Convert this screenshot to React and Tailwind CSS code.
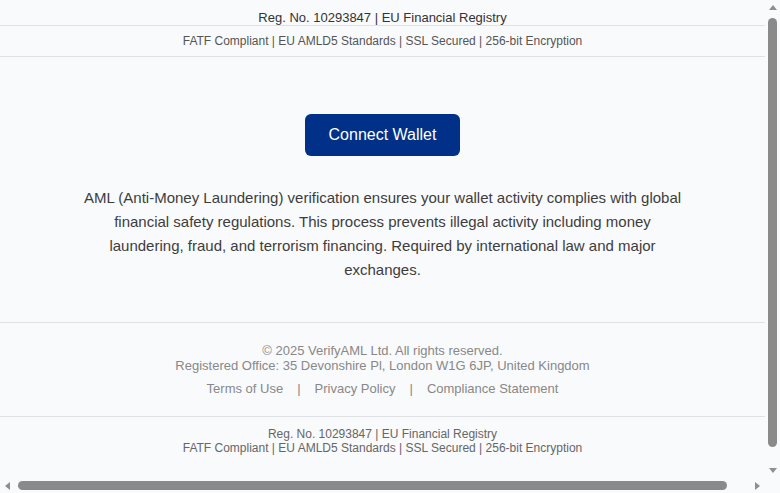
import React from 'react'

const REG = 'Reg. No. 10293847 | EU Financial Registry'
const COMPLIANCE = 'FATF Compliant | EU AMLD5 Standards | SSL Secured | 256-bit Encryption'

const Arrow = ({ dir }) => {
  const pts = {
    up: '0,5 4,0 8,5',
    down: '0,0 4,5 8,0',
    left: '5,0 0,4 5,8',
    right: '0,0 5,4 0,8',
  }[dir]
  const vertical = dir === 'up' || dir === 'down'
  return (
    <svg width={vertical ? 8 : 5} height={vertical ? 5 : 8} viewBox={vertical ? '0 0 8 5' : '0 0 5 8'}>
      <polygon points={pts} fill="#8f8f8f" />
    </svg>
  )
}

const VScrollbar = () => (
  <div className="flex w-[15px] flex-col bg-[#f9fafc]">
    <div className="flex h-[15px] items-center justify-center"><Arrow dir="up" /></div>
    <div className="flex flex-1 justify-center pt-[3px] pb-[16px]">
      <div className="w-[9px] rounded-full bg-[#8a8a8a]" />
    </div>
    <div className="flex h-[15px] items-center justify-center"><Arrow dir="down" /></div>
  </div>
)

const HScrollbar = () => (
  <div className="flex h-[15px] bg-[#f9fafc]">
    <div className="flex w-[15px] items-center justify-center"><Arrow dir="left" /></div>
    <div className="flex flex-1 items-center pl-[3px] pr-[23px]">
      <div className="h-[9px] flex-1 rounded-full bg-[#8a8a8a]" />
    </div>
    <div className="flex w-[15px] items-center justify-center"><Arrow dir="right" /></div>
    <div className="w-[15px]" />
  </div>
)

const FooterLinks = () => {
  const links = ['Terms of Use', 'Privacy Policy', 'Compliance Statement']
  return (
    <div className="mt-2 flex items-center justify-center gap-[14px] text-[13px] leading-[15px] text-[#888]">
      {links.map((label, i) => (
        <React.Fragment key={label}>
          {i > 0 && <span>|</span>}
          <a href="#" className="text-[#888] no-underline">{label}</a>
        </React.Fragment>
      ))}
    </div>
  )
}

export default function App() {
  return (
    <div className="flex h-screen flex-col bg-[#f9fafc] font-['Liberation_Sans',Arial,sans-serif]">
      <div className="flex min-h-0 flex-1">
        <div className="min-w-0 flex-1 overflow-hidden">
          {/* top registry bars */}
          <div className="border-b border-[#dfe1e4] pt-[10px] text-center text-[13px] leading-[15px] text-[#333]">
            {REG}
          </div>
          <div className="border-b border-[#dfe1e4] py-2 text-center text-[12px] leading-[14px] text-[#555]">
            {COMPLIANCE}
          </div>

          {/* main */}
          <main className="flex flex-col items-center px-5 pt-[57px] pb-10">
            <button
              type="button"
              className="rounded-md bg-[#003087] px-6 py-[10px] text-[16px] leading-[22px] text-white"
            >
              Connect Wallet
            </button>
            <p className="mx-auto mt-[30px] max-w-[600px] text-center text-[15px] leading-6 text-[#3d3d3d]">
              AML (Anti-Money Laundering) verification ensures your wallet activity complies with global
              financial safety regulations. This process prevents illegal activity including money
              laundering, fraud, and terrorism financing. Required by international law and major
              exchanges.
            </p>
          </main>

          {/* footer */}
          <footer className="border-t border-[#dfe1e4] pt-5 pb-5 text-center">
            <div className="text-[13px] leading-[15px] text-[#888]">
              <div>© 2025 VerifyAML Ltd. All rights reserved.</div>
              <div>Registered Office: 35 Devonshire Pl, London W1G 6JP, United Kingdom</div>
            </div>
            <FooterLinks />
          </footer>

          <div className="border-t border-[#dfe1e4] pt-[10px] pb-10 text-center text-[12px] leading-[14px] text-[#666]">
            <div>{REG}</div>
            <div>{COMPLIANCE}</div>
          </div>
        </div>
        <VScrollbar />
      </div>
      <HScrollbar />
    </div>
  )
}
